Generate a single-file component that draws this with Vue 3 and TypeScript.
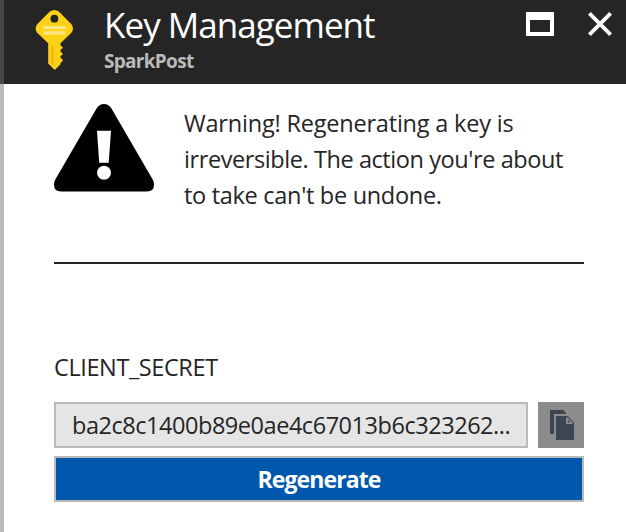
<script setup lang="ts">
interface WarningLine {
  text: string
  fit: string
}

const title = 'Key Management'
const provider = 'SparkPost'
const warning: WarningLine[] = [
  { text: 'Warning! Regenerating a key is', fit: 'wide' },
  { text: "irreversible. The action you're about", fit: 'tight' },
  { text: "to take can't be undone.", fit: 'medium' },
]
const secretName = 'CLIENT_SECRET'
const secretPreview = 'ba2c8c1400b89e0ae4c67013b6c323262...'
</script>

<template>
  <main class="blade">
    <header class="header">
      <svg class="key" width="38" height="62" viewBox="0 0 38 62" aria-hidden="true">
        <path
          fill="#fcd116"
          fill-rule="evenodd"
          d="M14.8 2.6Q19.3-.6 23.8 2.6L36.2 15Q39.8 19.5 36.2 24L25.5 34.2V36.2L28 38.8L25.5 41V42.6L28 45L25.5 47.2V48.8L28.2 51.2L25.5 54V55.2L19.7 61L13.2 54.6V34.2L2.4 24Q-1.2 19.5 2.4 15ZM19.4 5.8A3.9 3.9 0 1 0 19.4 13.6A3.9 3.9 0 1 0 19.4 5.8Z"
        />
        <path fill="#fee580" d="M8 17h22.5v3.3H8zM8 22.2h22.5v3.5H8z" />
        <path fill="#fcb514" d="M15.8 35.5L18.8 38.5V57L15.8 54Z" />
      </svg>
      <div class="heading">
        <h1>{{ title }}</h1>
        <p>{{ provider }}</p>
      </div>
      <div class="controls">
        <button type="button" aria-label="Maximize">
          <svg width="28" height="24" viewBox="0 0 28 24">
            <path fill="#fff" fill-rule="evenodd" d="M0 0H28V24H0ZM4 8V20H24V8Z" />
          </svg>
        </button>
        <button type="button" aria-label="Close">
          <svg width="24" height="24" viewBox="0 0 24 24">
            <path stroke="#fff" stroke-width="3.8" d="M1.4 1.4L22.6 22.6M22.6 1.4L1.4 22.6" />
          </svg>
        </button>
      </div>
    </header>

    <div class="body">
      <section class="warning">
        <svg width="100" height="88" viewBox="0 0 100 88" aria-hidden="true">
          <path
            d="M43 3.8Q45.5 0 50 0Q54.5 0 57 3.8L98.7 75.5Q100 77.7 100 80.5Q100 87.5 93 87.5H7Q0 87.5 0 80.5Q0 77.7 1.3 75.5Z"
          />
          <path fill="#fff" d="M43 26.7H57L54.7 58.7H45.2Z" />
          <circle cx="50" cy="68.8" r="7" fill="#fff" />
        </svg>
        <p>
          <span v-for="line in warning" :key="line.text" :class="line.fit">{{ line.text }}</span>
        </p>
      </section>

      <section class="secret">
        <h2>{{ secretName }}</h2>
        <div class="field">
          <div class="value">{{ secretPreview }}</div>
          <button class="copy" type="button" aria-label="Copy">
            <svg width="24" height="30" viewBox="0 0 24 30">
              <path fill="#3c4652" d="M0 0H13L16 3V4H4V24H0Z" />
              <path fill="#3c4652" d="M6 6H17.5L24 12.5V30H6Z" />
              <path fill="#8c8c8c" d="M16 7.6H17.8L22.4 12.2V14H16Z" />
              <path fill="#3c4652" d="M17.8 9.5L20.5 12.2H17.8Z" />
            </svg>
          </button>
        </div>
        <button class="regenerate" type="button">Regenerate</button>
      </section>
    </div>
  </main>
</template>

<style>
body {
  margin: 0;
  background: #fff;
}
</style>

<style scoped>
.blade {
  display: flex;
  flex-direction: column;
  height: 532px;
  background: #fff;
  color: #252525;
  font-family: 'Open Sans', 'Noto Sans', sans-serif;
  font-size: 23.5px;
}

h1,
h2,
p {
  margin: 0;
  font-weight: 400;
  white-space: nowrap;
}

button {
  box-sizing: border-box;
  border: 0;
  padding: 0;
  background: none;
  font-family: inherit;
}

svg {
  display: block;
  flex: none;
}

.header {
  box-sizing: border-box;
  display: flex;
  flex: none;
  align-items: flex-start;
  height: 84px;
  border-left: 4px solid #484848;
  padding-right: 14px;
  background: #252525;
}

.key {
  margin: 9px 0 0 31px;
}

.heading {
  margin-left: 31px;
}

h1 {
  color: #fff;
  font-size: 35px;
  line-height: 50px;
  letter-spacing: -0.97px;
}

.heading p {
  color: #bababa;
  font-size: 19px;
  font-weight: 700;
  line-height: 22px;
  letter-spacing: -0.7px;
}

.controls {
  display: flex;
  gap: 34px;
  margin: 12px 0 0 auto;
}

.body {
  flex: 1;
  border-left: 4px solid #bababa;
  padding: 20px 42px 0 50px;
}

.warning {
  display: flex;
  align-items: flex-start;
  gap: 30px;
  box-sizing: border-box;
  height: 160px;
  border-bottom: 2px solid #252525;
}

.warning p {
  padding-top: 1px;
}

.warning span {
  display: block;
  line-height: 36px;
}

.wide {
  letter-spacing: -0.2px;
}

.tight {
  letter-spacing: -0.42px;
}

.medium {
  letter-spacing: -0.3px;
}

.secret {
  padding-top: 85px;
}

h2 {
  font-size: 23.5px;
  line-height: 36px;
  letter-spacing: -0.4px;
}

.field {
  display: flex;
  gap: 10px;
  margin-top: 17px;
}

.value {
  box-sizing: border-box;
  width: 474px;
  height: 46px;
  border: 2px solid #bababa;
  padding-left: 16px;
  background: #e5e5e5;
  line-height: 42px;
  letter-spacing: -0.46px;
  white-space: nowrap;
}

.copy {
  display: grid;
  place-items: center;
  width: 46px;
  height: 46px;
  padding-left: 2px;
  background: #8c8c8c;
}

.regenerate {
  display: block;
  width: 100%;
  height: 46px;
  margin-top: 8px;
  border: 2px solid #bababa;
  background: #0058ad;
  color: #fff;
  font-size: 23px;
  font-weight: 700;
  line-height: 42px;
  letter-spacing: -0.88px;
}
</style>
